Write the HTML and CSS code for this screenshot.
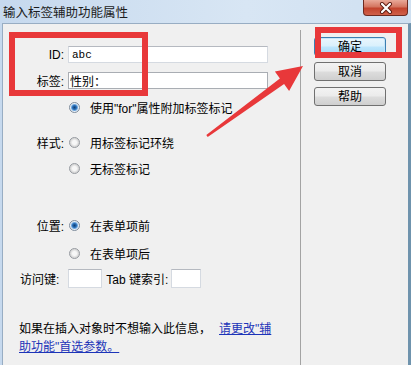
FILE: index.html
```html
<!DOCTYPE html>
<html lang="zh-CN">
<head>
  <meta charset="UTF-8">
  <title>输入标签辅助功能属性</title>
  <link rel="stylesheet" href="styles.css">
</head>
<body>
  <div class="win">
    <div class="titlebar">
      <span class="title">输入标签辅助功能属性</span>
      <span class="close">
        <svg width="14" height="12" viewBox="0 0 14 12">
          <path d="M3 2 L11 10 M11 2 L3 10" stroke="#5a1a10" stroke-width="4" stroke-linecap="round"/>
          <path d="M3 2 L11 10 M11 2 L3 10" stroke="#ffffff" stroke-width="2.2" stroke-linecap="round"/>
        </svg>
      </span>
    </div>

    <div class="body">
      <div class="main">
        <div class="row">
          <span class="lbl">ID:</span>
          <input class="txtbox txtbox-id" type="text" value="abc">
        </div>
        <div class="row row-2">
          <span class="lbl">标签:</span>
          <input class="txtbox txtbox-label" type="text" value="性别：">
        </div>

        <div class="row radio-row row-3">
          <span class="lbl"></span>
          <span class="radio checked"></span>
          <span class="opt">使用"for"属性附加标签标记</span>
        </div>
        <div class="row radio-row row-4">
          <span class="lbl">样式:</span>
          <span class="radio"></span>
          <span class="opt">用标签标记环绕</span>
        </div>
        <div class="row radio-row row-5">
          <span class="lbl"></span>
          <span class="radio"></span>
          <span class="opt">无标签标记</span>
        </div>

        <div class="row radio-row row-6">
          <span class="lbl">位置:</span>
          <span class="radio checked"></span>
          <span class="opt">在表单项前</span>
        </div>
        <div class="row radio-row row-7">
          <span class="lbl"></span>
          <span class="radio"></span>
          <span class="opt">在表单项后</span>
        </div>

        <div class="row keys">
          <span>访问键:</span>
          <input class="txtbox txtbox-key" type="text">
          <span class="tab-lbl">Tab 键索引:</span>
          <input class="txtbox txtbox-tab" type="text">
        </div>

        <p class="note">如果在插入对象时不想输入此信息，<a href="#">请更改"辅<br>助功能"首选参数。</a></p>
      </div>

      <div class="side">
        <button class="btn btn-default">确定</button>
        <button class="btn">取消</button>
        <button class="btn">帮助</button>
      </div>
    </div>

    <!-- красные пометки поверх диалога -->
    <div class="mark mark-fields"></div>
    <div class="mark mark-ok"></div>
    <svg class="arrow" width="411" height="365" viewBox="0 0 411 365">
      <polygon points="303,66 289.1,91 284.1,84.1 207.7,137 206.3,135 279.9,78.5 274.9,71.6" fill="#e8383a"/>
    </svg>
  </div>
</body>
</html>
```

FILE: styles.css
```css
body {
  margin: 0;
  padding: 0;
  background-color: #ffffff;
  font-family: "Liberation Sans", "Noto Sans CJK SC", sans-serif;
  font-size: 12px;
  color: #000000;
}
.win {
  position: relative;
  width: 411px;
  height: 365px;
  overflow: hidden;
  background: linear-gradient(to right, #c6d9ee, #d8e6f4 60%, #cfe0f1);
}
.titlebar {
  height: 23px;
  display: flex;
  align-items: center;
  padding-left: 3px;
}
.title {
  font-size: 12.5px;
  color: #1c1c1c;
  margin-top: -1px;
}
.close {
  margin-left: auto;
  margin-right: 3px;
  align-self: flex-start;
  width: 43px;
  height: 15px;
  border: 1px solid #6d2a20;
  border-top: none;
  border-radius: 0 0 4px 4px;
  background: linear-gradient(#e9a999, #d47560 45%, #c2432d 55%, #d0614a);
  display: flex;
  align-items: center;
  justify-content: center;
}
.body {
  display: flex;
  margin-left: 2px;
  height: 342px;
  border-left: 1px solid #98adc3;
  border-top: 1px solid #98adc3;
  border-right: 3px solid #6f93ad;
  background-color: #f0f0f0;
}
.main {
  width: 307px;
  display: flex;
  flex-direction: column;
  padding-top: 22px;
}
.side {
  width: 97px;
  margin-top: 6px;
  border-left: 1px solid #a3a3a3;
  display: flex;
  flex-direction: column;
  gap: 6px;
  padding-top: 7px;
  padding-left: 13px;
}
.row {
  display: flex;
  align-items: center;
  height: 17px;
}
.radio-row {
  height: 18px;
}
.row-2 { margin-top: 9px; }
.row-3 { margin-top: 9px; }
.row-4 { margin-top: 17px; }
.row-5 { margin-top: 8px; }
.row-6 { margin-top: 39px; }
.row-7 { margin-top: 10px; }
.lbl {
  width: 61px;
  text-align: right;
  flex-shrink: 0;
}
.txtbox {
  box-sizing: border-box;
  height: 17px;
  margin: 0;
  padding: 0 3px;
  border: 1px solid #d5dae1;
  border-top-color: #b5b9c0;
  background: #ffffff;
  font-family: "Liberation Sans", "Noto Sans CJK SC", sans-serif;
  font-size: 12px;
  outline: none;
}
.txtbox-id {
  margin-left: 4px;
  width: 200px;
  font-family: "Liberation Mono", monospace;
  font-size: 11px;
}
.txtbox-label {
  margin-left: 4px;
  width: 200px;
  padding-left: 1px;
  border-color: #a9adb3;
}
.radio {
  box-sizing: border-box;
  width: 11px;
  height: 11px;
  margin-left: 5px;
  border-radius: 50%;
  border: 1px solid #969aa0;
  background: radial-gradient(circle at 50% 50%, #f7f7f7 0, #f7f7f7 2px, #d8d8d8 4px, #e8e8e8);
  flex-shrink: 0;
}
.radio.checked {
  border-color: #7e8c9c;
  background: radial-gradient(circle, #0f3e73 0, #2a6fb7 2px, #6ea6dd 3px, #e6eef6 4px);
}
.opt {
  margin-left: 10px;
}
.keys {
  height: 19px;
  margin-top: 7px;
  padding-left: 17px;
}
.txtbox-key {
  height: 19px;
  width: 34px;
  margin-left: 9px;
}
.tab-lbl {
  margin-left: 4px;
}
.txtbox-tab {
  height: 19px;
  width: 30px;
  margin-left: 3px;
}
.note {
  margin: 32px 0 0 0;
  padding-left: 16px;
  line-height: 18px;
}
.note a {
  color: #1c34b8;
  margin-left: 8px;
}
.btn {
  box-sizing: border-box;
  width: 72px;
  height: 19px;
  padding: 0;
  border: 1px solid #707070;
  border-radius: 3px;
  background: linear-gradient(#f3f3f3, #ebebeb 48%, #dddddd 52%, #cfcfcf);
  font-family: "Liberation Sans", "Noto Sans CJK SC", sans-serif;
  font-size: 12px;
  color: #000000;
  line-height: 16px;
}
.btn-default {
  border-color: #3c7fb1;
  background: linear-gradient(#eaf6fd, #d9f0fc 48%, #bee6fd 52%, #a7d9f5);
  box-shadow: inset 0 0 0 1px #c7e6f8;
}
.mark {
  position: absolute;
  border: 6px solid #e8383a;
  pointer-events: none;
}
.mark-fields {
  left: 9px;
  top: 32px;
  width: 127px;
  height: 52px;
}
.mark-ok {
  left: 315px;
  top: 27px;
  width: 75px;
  height: 19px;
}
.arrow {
  position: absolute;
  left: 0;
  top: 0;
  pointer-events: none;
}
```
